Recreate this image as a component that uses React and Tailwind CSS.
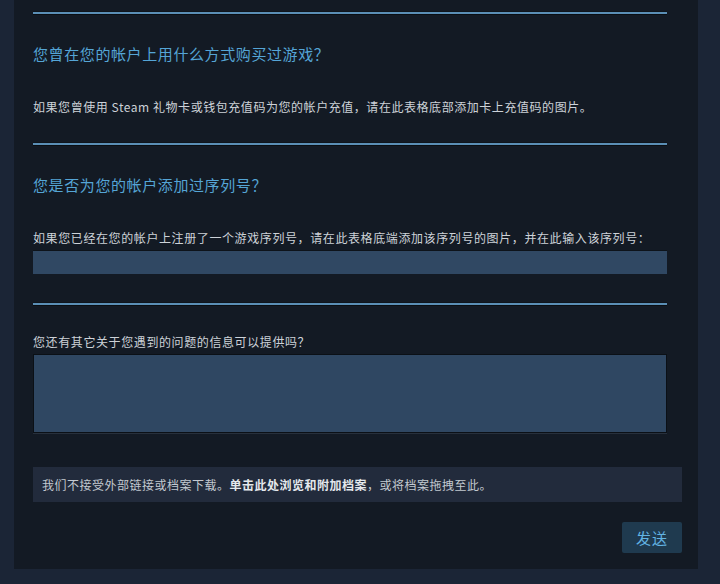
import React from "react";

const font = { fontFamily: '"Noto Sans CJK SC", "Noto Sans", Arial, sans-serif' };

function Divider({ className = "" }) {
  return (
    <div className={"w-[634px] h-[2px] bg-[#5b8fb6] shadow-[0_1px_0_#0a0e13,0_-1px_0_#0f151c] " + className} />
  );
}

export default function App() {
  return (
    <div className="w-[720px] h-[584px] bg-[#1b2536] overflow-hidden" style={font}>
      <div className="ml-[14px] w-[684px] bg-[#131a24] pl-[19px] pr-[16px] pb-[16px]">
        <div className="pt-[12px]">
          <Divider />
        </div>
        <h2 className="mt-[30px] text-[15px] leading-[20px] tracking-[0.6px] text-[#55a5d6] font-normal">
          您曾在您的帐户上用什么方式购买过游戏？
        </h2>
        <p className="mt-[35px] text-[12px] leading-[16px] tracking-[0.55px] text-[#cdd2d8]">
          如果您曾使用 Steam 礼物卡或钱包充值码为您的帐户充值，请在此表格底部添加卡上充值码的图片。
        </p>
        <Divider className="mt-[28px]" />
        <h2 className="mt-[30px] text-[15px] leading-[20px] tracking-[0.6px] text-[#55a5d6] font-normal">
          您是否为您的帐户添加过序列号？
        </h2>
        <p className="mt-[35px] text-[12px] leading-[16px] tracking-[0.6px] text-[#cdd2d8]">
          如果您已经在您的帐户上注册了一个游戏序列号，请在此表格底端添加该序列号的图片，并在此输入该序列号：
        </p>
        <input
          type="text"
          className="mt-[4px] block w-[634px] h-[24px] bg-[#304863] border-t border-[#0d131a] outline-none text-[12px] text-white px-2"
        />
        <Divider className="mt-[29px]" />
        <p className="mt-[29px] text-[12px] leading-[16px] tracking-[0.6px] text-[#cdd2d8]">
          您还有其它关于您遇到的问题的信息可以提供吗？
        </p>
        <textarea className="mt-[4px] block w-[634px] h-[79px] bg-[#2f4762] border border-[#0b1016] shadow-[0_1px_0_#27303c] outline-none resize-none text-[12px] text-white p-2" />
        <div className="mt-[34px] h-[35px] bg-[#222b3c] flex items-center pl-[9px] text-[12px] tracking-[0.5px] text-[#c3c9d0]">
          <span>
            我们不接受外部链接或档案下载。
            <span className="font-bold text-[#e4e8ec]">单击此处浏览和附加档案</span>
            ，或将档案拖拽至此。
          </span>
        </div>
        <div className="mt-[20px] flex justify-end">
          <button className="w-[60px] h-[31px] rounded-[2px] bg-[#1f3a4f] text-[#62b3e3] text-[15px] leading-none tracking-[1px]">
            发送
          </button>
        </div>
      </div>
    </div>
  );
}
